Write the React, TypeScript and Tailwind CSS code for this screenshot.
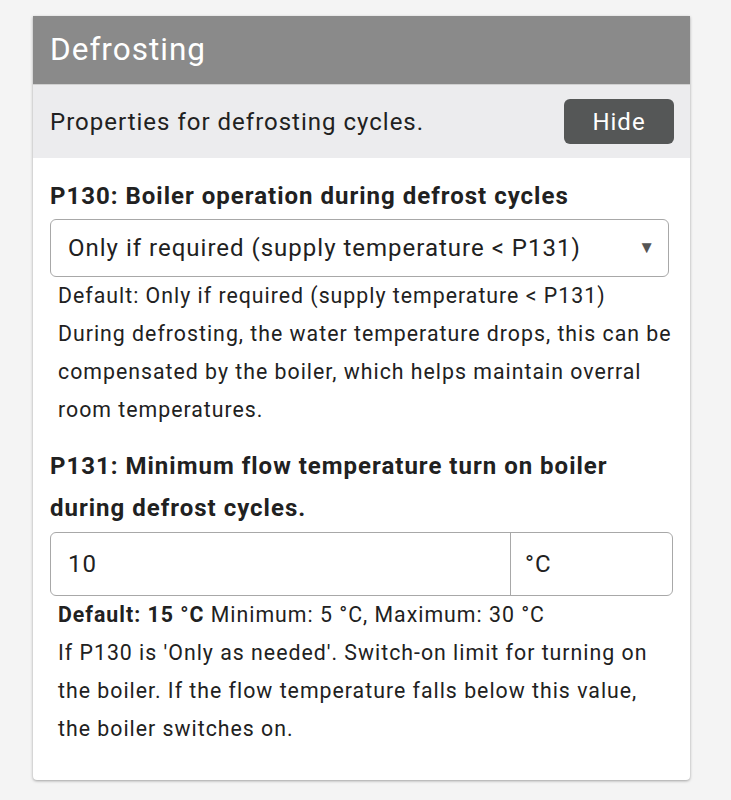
export default function App() {
  return (
    <div className="min-h-[800px] bg-[#f4f4f4] pt-4 pl-[33px] pr-[41px] pb-5 font-['Roboto',sans-serif] tracking-[1px] text-[#212121]">
      <div className="overflow-hidden rounded-b bg-white shadow-[0_1px_3px_rgba(0,0,0,0.35)]">
        <div className="h-[69px] border-b border-[#d0d0d0] bg-[#8a8a8a] px-[17px] pt-[15px] text-[31.5px] leading-[38px] text-white">
          Defrosting
        </div>
        <div className="flex h-[73px] items-center justify-between bg-[#ececee] pl-[17px] pr-4">
          <span className="text-[24px]">Properties for defrosting cycles.</span>
          <button className="h-[45px] w-[110px] rounded-md bg-[#555757] text-[24px] text-white">Hide</button>
        </div>
        <div className="px-[17px] pt-[21px] pb-8">
          <div className="text-[24px] font-bold leading-[34px]">P130: Boiler operation during defrost cycles</div>
          <div className="mt-[6px] mr-1 flex h-[58px] items-center justify-between rounded-md border border-[#a8a8a8] pl-[17px] pr-[12px]">
            <span className="text-[24px]">Only if required (supply temperature &lt; P131)</span>
            <span className="text-[17px] text-[#555]">▼</span>
          </div>
          <div className="pl-2 text-[21.3px] leading-[38px]">
            <div>Default: Only if required (supply temperature &lt; P131)</div>
            <div>
              During defrosting, the water temperature drops, this can be compensated by the boiler, which helps
              maintain overral room temperatures.
            </div>
          </div>
          <div className="mt-4 text-[24px] font-bold leading-[42px]">
            P131: Minimum flow temperature turn on boiler during defrost cycles.
          </div>
          <div className="mt-[3px] flex h-[64px] rounded-md border border-[#a8a8a8]">
            <div className="flex flex-1 items-center pl-[17px] text-[24px]">10</div>
            <div className="flex w-[162px] items-center border-l border-[#a8a8a8] pl-[14px] text-[24px]">°C</div>
          </div>
          <div className="pl-2 text-[21.3px] leading-[38px]">
            <div>
              <span className="font-bold">Default: 15 °C</span> Minimum: 5 °C, Maximum: 30 °C
            </div>
            <div>
              If P130 is 'Only as needed'. Switch-on limit for turning on the boiler. If the flow temperature falls
              below this value, the boiler switches on.
            </div>
          </div>
        </div>
      </div>
    </div>
  );
}
